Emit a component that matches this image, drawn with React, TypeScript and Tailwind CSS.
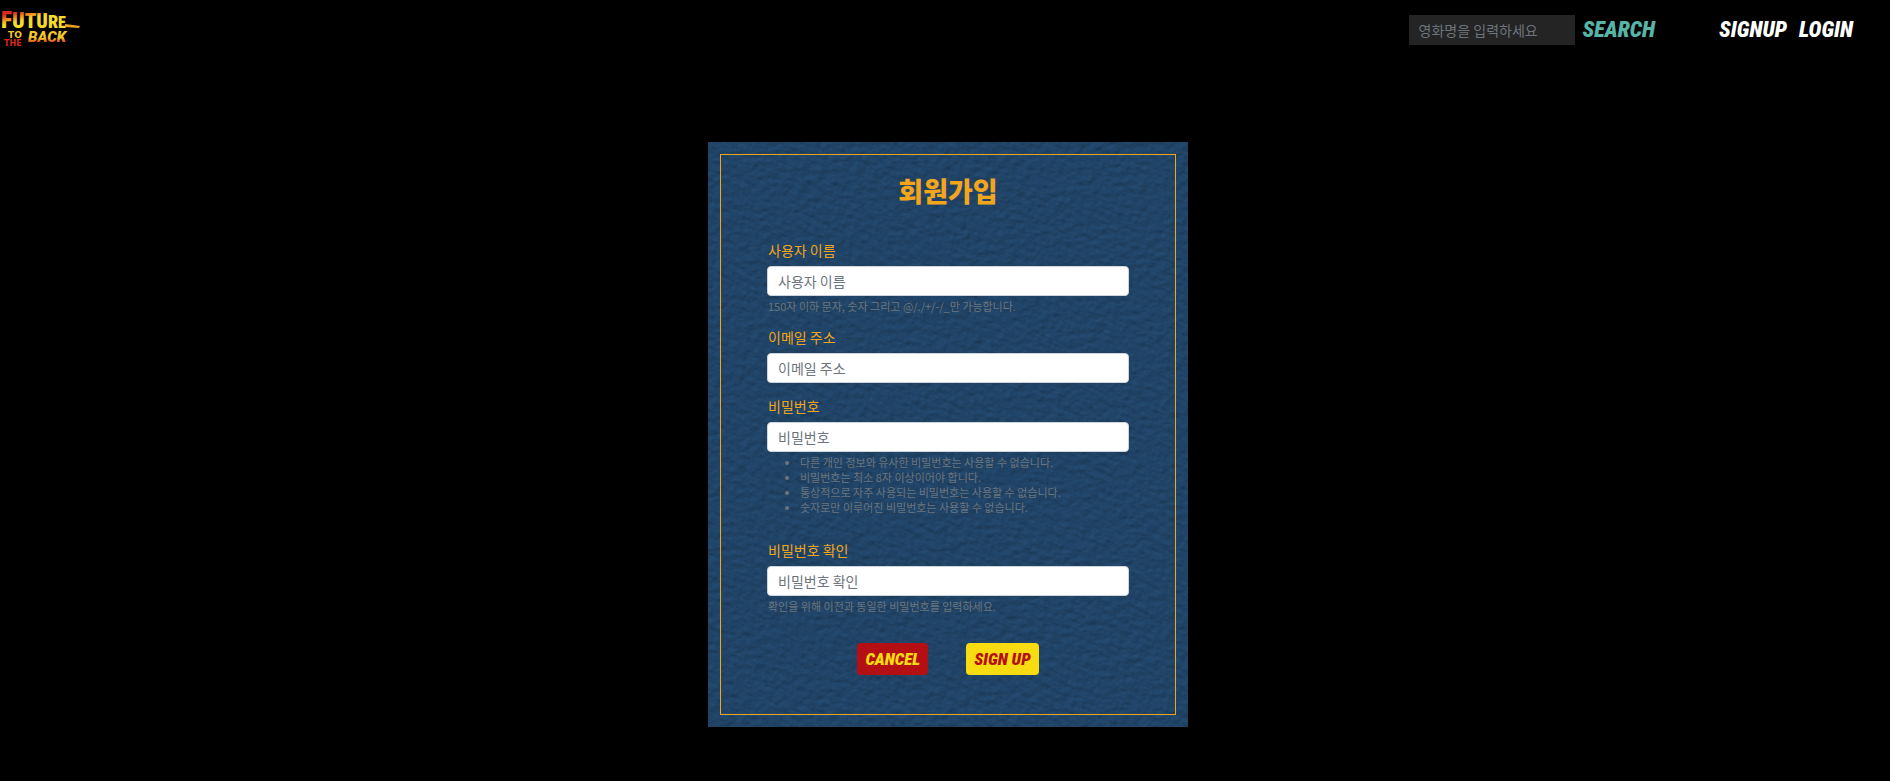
import type { ReactNode } from "react";

const display = "font-['Roboto_Condensed','Open_Sans_Condensed','Roboto',sans-serif] font-black italic uppercase leading-6";

function Logo() {
  return (
    <svg viewBox="0 0 82 60" className="block h-[60px] w-[82px]" role="img" aria-label="Future to the back">
      <defs>
        <linearGradient id="flame" gradientUnits="userSpaceOnUse" x1="0" y1="12" x2="4" y2="29">
          <stop offset="0.2" stopColor="#d9281c" />
          <stop offset="0.5" stopColor="#f08a1e" />
          <stop offset="0.75" stopColor="#f5dc28" />
        </linearGradient>
        <linearGradient id="ember" gradientUnits="userSpaceOnUse" x1="0" y1="32" x2="0" y2="43">
          <stop offset="0.55" stopColor="#f5c828" />
          <stop offset="1" stopColor="#d9281c" />
        </linearGradient>
      </defs>
      <text x="1" y="28" fontFamily="Roboto Condensed" fontWeight="900" fill="url(#flame)">
        <tspan fontSize="23">F</tspan>
        <tspan fontSize="22">U</tspan>
        <tspan fontSize="21">T</tspan>
        <tspan fontSize="20">U</tspan>
        <tspan fontSize="18">R</tspan>
        <tspan fontSize="16">E</tspan>
      </text>
      <g fontFamily="DejaVu Sans" fontWeight="700">
        <text x="8" y="38" fontSize="9" fill="#f5c828">TO</text>
        <text x="4" y="46" fontSize="8" fill="#d9281c">THE</text>
      </g>
      <text x="28" y="42" fontFamily="Roboto" fontWeight="900" fontSize="15" fontStyle="italic" fill="url(#ember)">
        BACK
      </text>
      <path d="M65 24 73 25 80 26 79 28 65 27Z" fill="#eea023" />
    </svg>
  );
}

function Texture() {
  return (
    <svg className="absolute inset-0 h-full w-full" aria-hidden="true">
      <filter id="leather" x="0" y="0" width="100%" height="100%" colorInterpolationFilters="sRGB">
        <feTurbulence type="fractalNoise" baseFrequency="0.12 0.18" numOctaves="5" seed="8" />
        <feDiffuseLighting lightingColor="#265079" surfaceScale="0.8" diffuseConstant="1">
          <feDistantLight azimuth="215" elevation="58" />
        </feDiffuseLighting>
      </filter>
      <g transform="rotate(28)">
        <rect x="-100" y="-300" width="1100" height="1300" filter="url(#leather)" />
      </g>
    </svg>
  );
}

type FieldProps = { id: string; label: string; type: string; children?: ReactNode };

function Field({ id, label, type, children }: FieldProps) {
  return (
    <div>
      <label htmlFor={id} className="mb-[6px] block px-px text-sm leading-5 text-[#f3a51c]">
        {label}
      </label>
      <input
        id={id}
        type={type}
        placeholder={label}
        className="block h-[30px] w-full rounded border border-[#ced4da] bg-white px-2.5 text-sm text-gray-700 outline-none placeholder:text-[#6c757d]"
      />
      {children}
    </div>
  );
}

const hint = "text-[11px] leading-[15px] text-[#6c757d]";

const rules = [
  "다른 개인 정보와 유사한 비밀번호는 사용할 수 없습니다.",
  "비밀번호는 최소 8자 이상이어야 합니다.",
  "통상적으로 자주 사용되는 비밀번호는 사용할 수 없습니다.",
  "숫자로만 이루어진 비밀번호는 사용할 수 없습니다.",
];

export default function App() {
  return (
    <div className="min-h-screen bg-black font-['Noto_Sans_CJK_KR',sans-serif]">
      <header className="flex h-[60px] items-center justify-between pr-[37px]">
        <a href="#home">
          <Logo />
        </a>
        <div className="flex items-center">
          <form className="flex items-center gap-2" onSubmit={(e) => e.preventDefault()}>
            <input
              type="search"
              aria-label="영화명"
              placeholder="영화명을 입력하세요"
              className="h-[30px] w-[166px] bg-[#242424] px-2.5 text-sm text-gray-200 outline-none placeholder:text-[#6c757d]"
            />
            <button type="submit" className={`${display} text-[22px] text-[#56b5a6]`}>
              Search
            </button>
          </form>
          <nav className={`${display} ml-16 flex gap-3 text-[22px] text-white`}>
            <a href="#signup">Signup</a>
            <a href="#login">Login</a>
          </nav>
        </div>
      </header>

      <main className="flex justify-center pb-[54px] pl-[22px] pr-4 pt-[82px]">
        <section className="relative w-full max-w-[480px] overflow-hidden bg-[#204569] p-3">
          <Texture />
          <form
            className="relative border border-[#f3a51c] px-[46px] pb-[39px] pt-[18px]"
            onSubmit={(e) => e.preventDefault()}
          >
            <h1 className="mb-[31px] text-center text-[27px] font-black leading-9 text-[#f3a51c]">회원가입</h1>
            <div className="flex flex-col gap-[13px]">
              <Field id="username" label="사용자 이름" type="text">
                <p className={`${hint} mt-[3px] px-px`}>150자 이하 문자, 숫자 그리고 @/./+/-/_만 가능합니다.</p>
              </Field>
              <Field id="email" label="이메일 주소" type="email" />
              <Field id="password" label="비밀번호" type="password">
                <ul className={`${hint} mb-3 mt-[3px] list-disc pl-[33px]`}>
                  {rules.map((rule) => (
                    <li key={rule}>{rule}</li>
                  ))}
                </ul>
              </Field>
              <Field id="confirm" label="비밀번호 확인" type="password">
                <p className={`${hint} mt-[3px] px-px`}>확인을 위해 이전과 동일한 비밀번호를 입력하세요.</p>
              </Field>
            </div>
            <div className="mt-[29px] flex justify-center gap-[38px]">
              <button type="button" className={`${display} h-8 rounded bg-[#b40f12] px-2 text-[17px] text-[#f8dc12]`}>
                Cancel
              </button>
              <button type="submit" className={`${display} h-8 rounded bg-[#f8dc12] px-2 text-[17px] text-[#b40f12]`}>
                Sign up
              </button>
            </div>
          </form>
        </section>
      </main>
    </div>
  );
}
